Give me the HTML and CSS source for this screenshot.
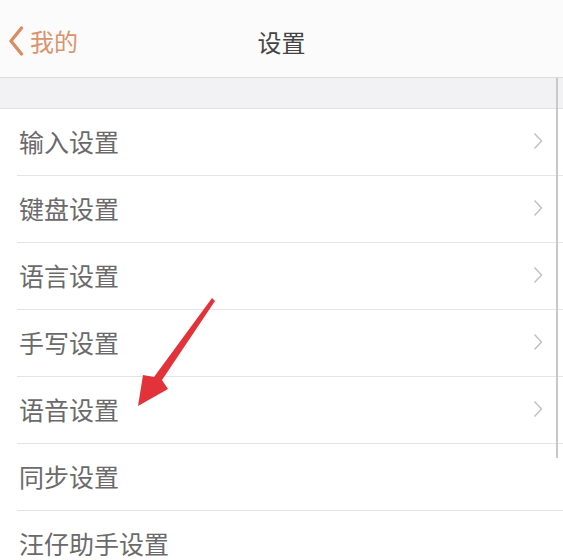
FILE: index.html
```html
<!DOCTYPE html>
<html lang="zh-CN">
<head>
<meta charset="utf-8">
<link rel="stylesheet" href="styles.css">
</head>
<body>
<div class="page">
  <header class="nav">
    <div class="back">
      <svg class="back-icon" width="16" height="30" viewBox="0 0 16 30"><polyline points="13.5,2 3,15 13.5,28" fill="none" stroke="#d68e66" stroke-width="3.4" stroke-linecap="round" stroke-linejoin="round"/></svg>
      <span class="back-text">我的</span>
    </div>
    <div class="title">设置</div>
  </header>
  <div class="gap"></div>
  <ul class="list">
    <li class="row"><span>输入设置</span><svg class="chev" width="10" height="18" viewBox="0 0 10 18"><polyline points="1.5,1.5 8.5,9 1.5,16.5" fill="none" stroke="#c2c2c2" stroke-width="1.5"/></svg></li>
    <li class="row"><span>键盘设置</span><svg class="chev" width="10" height="18" viewBox="0 0 10 18"><polyline points="1.5,1.5 8.5,9 1.5,16.5" fill="none" stroke="#c2c2c2" stroke-width="1.5"/></svg></li>
    <li class="row"><span>语言设置</span><svg class="chev" width="10" height="18" viewBox="0 0 10 18"><polyline points="1.5,1.5 8.5,9 1.5,16.5" fill="none" stroke="#c2c2c2" stroke-width="1.5"/></svg></li>
    <li class="row"><span>手写设置</span><svg class="chev" width="10" height="18" viewBox="0 0 10 18"><polyline points="1.5,1.5 8.5,9 1.5,16.5" fill="none" stroke="#c2c2c2" stroke-width="1.5"/></svg></li>
    <li class="row"><span>语音设置</span><svg class="chev" width="10" height="18" viewBox="0 0 10 18"><polyline points="1.5,1.5 8.5,9 1.5,16.5" fill="none" stroke="#c2c2c2" stroke-width="1.5"/></svg></li>
    <li class="row"><span>同步设置</span></li>
    <li class="row"><span>汪仔助手设置</span></li>
  </ul>
  <div class="scrollbar"></div>
  <svg class="arrow" width="563" height="560" viewBox="0 0 563 560">
    <polygon points="212,298 215,301 162,380 168,389 138,406 143,375 154,377" fill="#e2333b"/>
  </svg>
</div>
</body>
</html>
```
FILE: styles.css
```css
html, body {
  margin: 0;
  padding: 0;
  background: #ffffff;
}
.page {
  position: relative;
  width: 563px;
  height: 560px;
  overflow: hidden;
  font-family: "Noto Sans CJK SC", "Noto Sans", sans-serif;
}
.nav {
  position: relative;
  height: 77px;
  background: #fbfbfb;
  border-bottom: 1px solid #dcdcdc;
  display: flex;
  align-items: center;
  justify-content: center;
}
.back {
  position: absolute;
  left: 8px;
  top: 0;
  height: 77px;
  display: flex;
  align-items: center;
  gap: 6px;
}
.back-icon {
  margin-top: 4px;
}
.back-text {
  font-size: 24px;
  color: #d9946e;
  margin-top: 3px;
}
.title {
  font-size: 24px;
  color: #444444;
  margin-top: 6px;
}
.gap {
  height: 30px;
  background: #f2f2f4;
  border-bottom: 1px solid #e2e2e2;
}
.list {
  list-style: none;
  margin: 0;
  padding: 0;
}
.row {
  position: relative;
  height: 67px;
  box-sizing: border-box;
  padding: 0 20px 3px 19px;
  display: flex;
  align-items: center;
  justify-content: space-between;
  font-size: 25px;
  color: #6a6a6a;
}
.row::after {
  content: "";
  position: absolute;
  left: 17px;
  right: 0;
  bottom: 0;
  height: 1px;
  background: #e4e4e4;
}
.row:last-child::after {
  display: none;
}
.scrollbar {
  position: absolute;
  left: 556px;
  top: 78px;
  width: 2px;
  height: 380px;
  background: #c8c8c8;
}
.arrow {
  position: absolute;
  left: 0;
  top: 0;
  pointer-events: none;
}
```
